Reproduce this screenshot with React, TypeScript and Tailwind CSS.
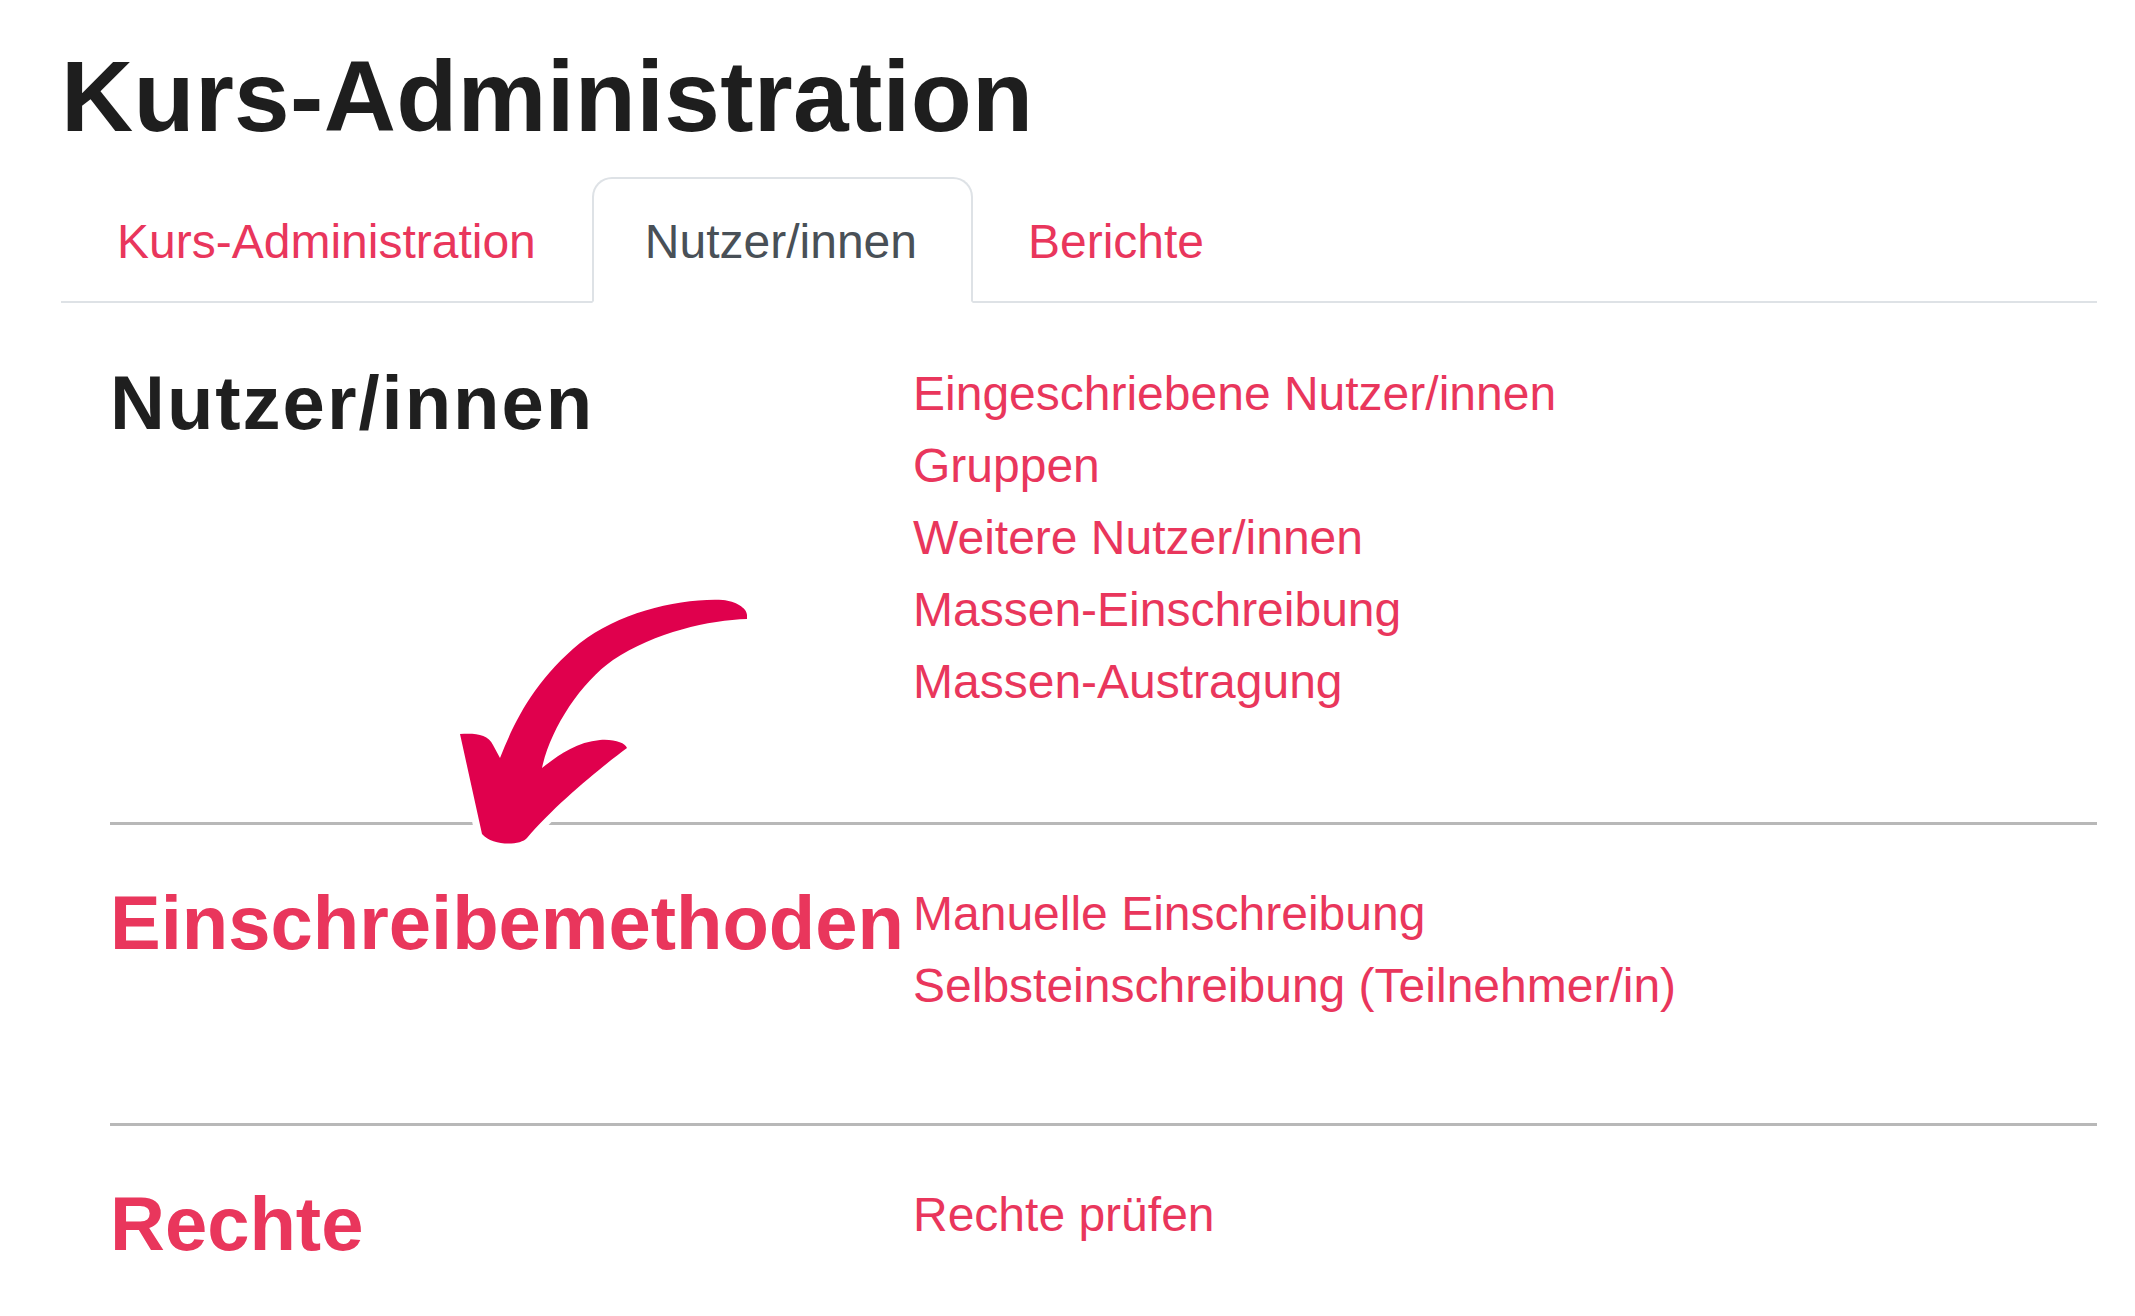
import React from "react";

const RED = "text-[#e9365c]";

function Section({
  title,
  dark,
  links,
  first,
  pb,
}: {
  title: string;
  dark?: boolean;
  links: string[];
  first?: boolean;
  pb?: string;
}) {
  return (
    <div
      className={
        (first
          ? "flex pt-[55px] "
          : "flex border-t-[3px] border-[#b8b8b8] pt-[53px] ") + (pb ?? "pb-[104px]")
      }
    >
      <h3
        className={
          "w-[803px] shrink-0 mt-[2px] text-[76px] leading-[86px] font-bold whitespace-nowrap " +
          (dark ? "text-[#1f1f1f] tracking-[2px]" : RED)
        }
      >
        {title}
      </h3>
      <ul className="flex flex-col">
        {links.map((l) => (
          <li key={l} className={"text-[48px] leading-[72px] whitespace-nowrap " + RED}>
            {l}
          </li>
        ))}
      </ul>
    </div>
  );
}

export default function App() {
  return (
    <div className="relative h-[1316px] overflow-hidden bg-white font-['Liberation_Sans',Arial,sans-serif] pl-[61px] pr-[38px] pt-[46px]">
      <h1 className="text-[100px] leading-none font-bold text-[#1e1e1e] tracking-[0.3px] whitespace-nowrap">
        Kurs-Administration
      </h1>
      <nav className="mt-[31px] flex border-b-2 border-[#dee2e6]">
        <a className={"-mb-[2px] border-2 border-transparent px-[54px] pt-[27px] pb-[23px] text-[48px] leading-[72px] whitespace-nowrap " + RED}>
          Kurs-Administration
        </a>
        <a className="-mb-[2px] border-2 border-[#dee2e6] border-b-white bg-white rounded-t-[20px] pl-[51px] pr-[54px] pt-[27px] pb-[23px] text-[48px] leading-[72px] text-[#495057] whitespace-nowrap">
          Nutzer/innen
        </a>
        <a className={"-mb-[2px] border-2 border-transparent pl-[53px] pr-[54px] pt-[27px] pb-[23px] text-[48px] leading-[72px] whitespace-nowrap " + RED}>
          Berichte
        </a>
      </nav>
      <div className="ml-[49px]">
        <Section
          first
          dark
          title="Nutzer/innen"
          links={[
            "Eingeschriebene Nutzer/innen",
            "Gruppen",
            "Weitere Nutzer/innen",
            "Massen-Einschreibung",
            "Massen-Austragung",
          ]}
        />
        <Section
          title="Einschreibemethoden"
          pb="pb-[101px]"
          links={["Manuelle Einschreibung", "Selbsteinschreibung (Teilnehmer/in)"]}
        />
        <Section title="Rechte" links={["Rechte prüfen"]} />
      </div>
      <svg
        className="absolute left-[440px] top-[580px]"
        width="340"
        height="280"
        viewBox="0 0 340 280"
      >
        <path
          d="M 307 39 C 270 40, 215 52, 173 80 C 140 103, 110 150, 102 188 C 115 178, 135 162, 160 160 C 175 159, 185 163, 187 168 C 160 188, 115 225, 87 258 C 80 266, 52 266, 42 254 L 20 154 C 35 153, 48 154, 53 165 L 60 178 C 75 140, 95 100, 140 63 C 180 32, 240 18, 283 20 C 295 21, 307 28, 307 35 Z"
          fill="#e0004d"
          stroke="#ffffff"
          strokeWidth="14"
          strokeLinejoin="round"
          paintOrder="stroke"
        />
      </svg>
    </div>
  );
}
